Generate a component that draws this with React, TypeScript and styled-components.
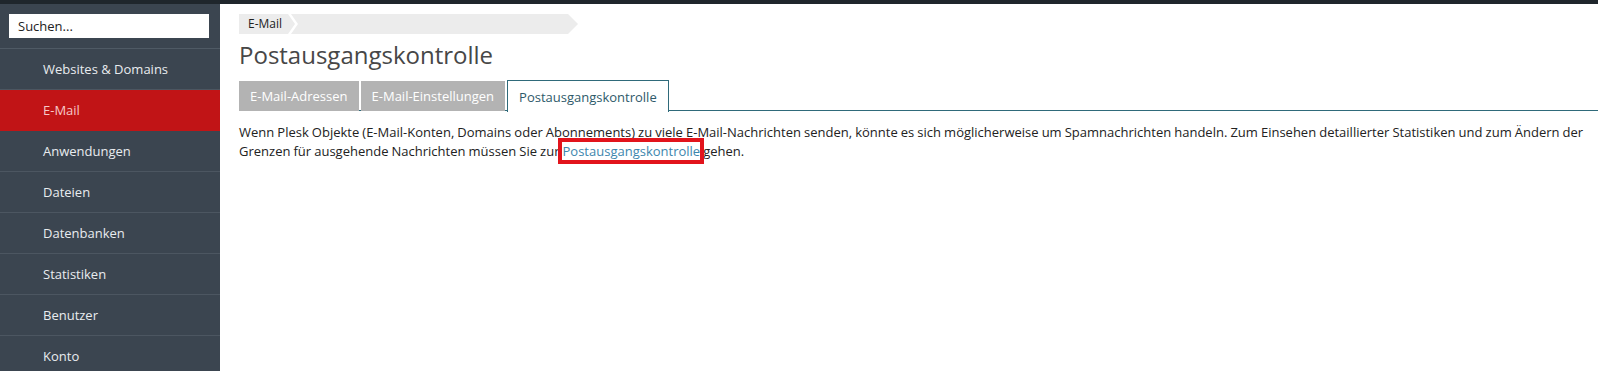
import React from "react";
import styled, { createGlobalStyle } from "styled-components";

const Global = createGlobalStyle`
  html, body { margin: 0; padding: 0; background: #ffffff; }
  body { font-family: "Open Sans", "Noto Sans", sans-serif; font-size: 13px; }
  * { box-sizing: border-box; }
`;

const Page = styled.div`
  width: 1598px;
  height: 371px;
  display: flex;
  flex-direction: column;
  overflow: hidden;
`;

const TopBar = styled.div`
  height: 4px;
  background: #1f262c;
  flex: none;
`;

const Body = styled.div`
  flex: 1;
  display: flex;
  min-height: 0;
`;

const Sidebar = styled.nav`
  width: 220px;
  flex: none;
  background: #3b4550;
  display: flex;
  flex-direction: column;
  overflow: hidden;
`;

const SearchArea = styled.div`
  flex: none;
  padding: 10px 11px 10px 9px;
  border-bottom: 1px solid #4f5a65;
`;

const SearchInput = styled.input`
  display: block;
  width: 200px;
  height: 24px;
  border: none;
  outline: none;
  padding: 0 9px;
  font-family: "Open Sans", "Noto Sans", sans-serif;
  font-size: 13px;
  color: #222;
  background: #fff;
  &::placeholder { color: #222; }
`;

const NavItem = styled.div<{ $active?: boolean }>`
  flex: none;
  height: 41px;
  display: flex;
  align-items: center;
  padding-left: 43px;
  font-size: 13px;
  color: ${(p) => (p.$active ? "#f6c9c9" : "#e9ecef")};
  background: ${(p) => (p.$active ? "#c11416" : "transparent")};
  border-bottom: 1px solid ${(p) => (p.$active ? "#c11416" : "#4c5661")};
`;

const Main = styled.main`
  flex: 1;
  padding: 10px 0 0 19px;
  display: flex;
  flex-direction: column;
  color: #222;
`;

const Breadcrumb = styled.div`
  width: 339px;
  height: 20px;
  background: #ececec;
  clip-path: polygon(0 0, calc(100% - 10px) 0, 100% 50%, calc(100% - 10px) 100%, 0 100%);
  display: flex;
  align-items: center;
`;

const Crumb = styled.span`
  font-size: 12px;
  color: #222;
  padding: 0 6px 0 9px;
  line-height: 20px;
`;

const Chevron = styled.svg`
  width: 10px;
  height: 20px;
  display: block;
`;

const Title = styled.h1`
  margin: 6px 0 0 0;
  font-size: 24px;
  font-weight: 400;
  color: #474747;
  line-height: 30px;
`;

const TabBar = styled.div`
  margin-top: 10px;
  display: flex;
  gap: 2px;
  border-bottom: 1px solid #2f6a7a;
  height: 31px;
`;

const Tab = styled.div<{ $active?: boolean }>`
  margin-top: ${(p) => (p.$active ? "0" : "1px")};
  padding: 0 11px;
  display: flex;
  align-items: center;
  font-size: 13px;
  color: ${(p) => (p.$active ? "#2e5a6a" : "#ffffff")};
  background: ${(p) => (p.$active ? "#ffffff" : "#b3b3b3")};
  border: ${(p) => (p.$active ? "1px solid #2f6a7a" : "none")};
  border-bottom: none;
  margin-bottom: ${(p) => (p.$active ? "-1px" : "0")};
  height: ${(p) => (p.$active ? "32px" : "30px")};
`;

const Paragraph = styled.p`
  margin: 12px 0 0 0;
  font-size: 13px;
  line-height: 19px;
  word-spacing: -0.3px;
  color: #222;
`;

const Link = styled.a`
  color: #3d86ad;
  text-decoration: none;
  position: relative;
  &::after {
    content: "";
    position: absolute;
    left: -5px;
    right: -4px;
    top: -4px;
    bottom: -4px;
    border: 4px solid #e2141c;
    pointer-events: none;
  }
`;

const items = [
  "Websites & Domains",
  "E-Mail",
  "Anwendungen",
  "Dateien",
  "Datenbanken",
  "Statistiken",
  "Benutzer",
  "Konto",
];

export default function App() {
  return (
    <>
      <Global />
      <Page>
        <TopBar />
        <Body>
          <Sidebar>
            <SearchArea>
              <SearchInput placeholder="Suchen..." />
            </SearchArea>
            {items.map((it) => (
              <NavItem key={it} $active={it === "E-Mail"}>
                {it}
              </NavItem>
            ))}
          </Sidebar>
          <Main>
            <Breadcrumb>
              <Crumb>E-Mail</Crumb>
              <Chevron viewBox="0 0 10 20">
                <polygon points="0,0 3,0 10,10 3,20 0,20 7,10" fill="#ffffff" />
              </Chevron>
            </Breadcrumb>
            <Title>Postausgangskontrolle</Title>
            <TabBar>
              <Tab>E-Mail-Adressen</Tab>
              <Tab>E-Mail-Einstellungen</Tab>
              <Tab $active>Postausgangskontrolle</Tab>
            </TabBar>
            <Paragraph>
              Wenn Plesk Objekte (E-Mail-Konten, Domains oder Abonnements) zu viele E-Mail-Nachrichten senden, könnte es sich möglicherweise um Spamnachrichten handeln. Zum Einsehen detaillierter Statistiken und zum Ändern der Grenzen für ausgehende Nachrichten müssen Sie zur{" "}
              <Link href="#">Postausgangskontrolle</Link> gehen.
            </Paragraph>
          </Main>
        </Body>
      </Page>
    </>
  );
}
